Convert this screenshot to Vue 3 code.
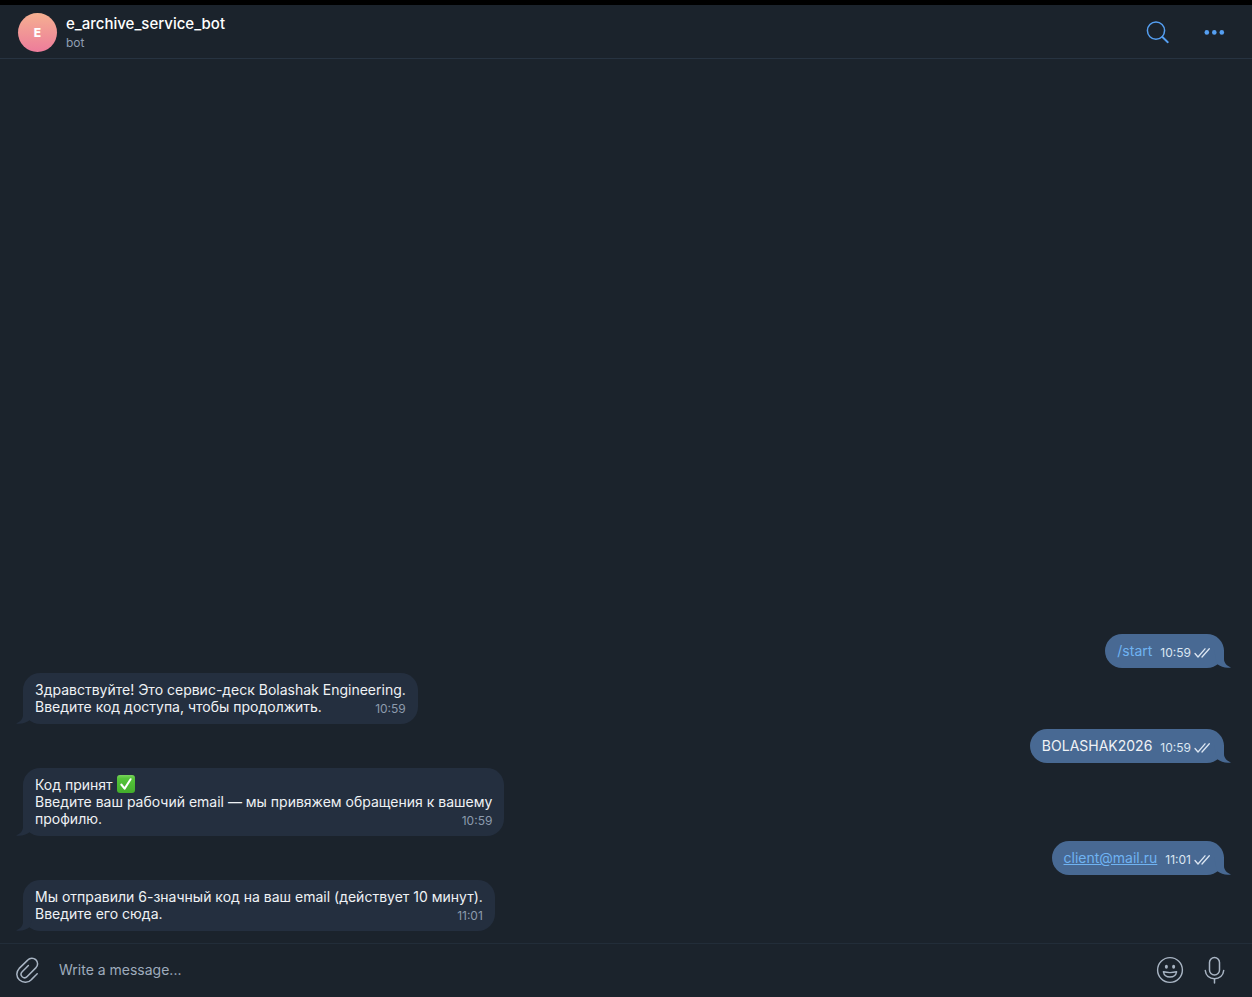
<template>
  <div class="chat">
    <header class="chat-header">
      <div class="avatar">E</div>
      <div class="peer">
        <h1 class="peer-name">e_archive_service_bot</h1>
        <p class="peer-status">bot</p>
      </div>
      <button class="icon-btn" type="button" aria-label="Search">
        <svg width="24" height="24" viewBox="0 0 24 24" fill="none" stroke="currentColor" stroke-width="1.5" stroke-linecap="round">
          <circle cx="10" cy="9.6" r="8.6" />
          <path d="M16.4 16L21.8 21.2" stroke-width="1.9" />
        </svg>
      </button>
      <button class="icon-btn" type="button" aria-label="More">
        <svg width="24" height="24" viewBox="0 0 24 24" fill="currentColor">
          <circle cx="4.8" cy="11.4" r="2.3" />
          <circle cx="12.3" cy="11.4" r="2.3" />
          <circle cx="19.8" cy="11.4" r="2.3" />
        </svg>
      </button>
    </header>

    <main class="messages">
      <div
        v-for="message in messages"
        :key="message.id"
        :class="['bubble', message.out ? 'bubble-out' : 'bubble-in']"
      >
        <svg v-if="message.out" class="tail" width="17" height="18" viewBox="0 0 17 18" aria-hidden="true">
          <path d="M0 0H10V9C10 13 13 16 17 17.5C12 18.5 7 17 3 14Z" />
        </svg>
        <svg v-else class="tail" width="17" height="18" viewBox="0 0 17 18" aria-hidden="true">
          <path d="M17 0H7V9C7 13 4 16 0 17.5C5 18.5 10 17 14 14Z" />
        </svg>

        <div class="text">
          <p v-for="(line, i) in message.lines" :key="i">
            <a v-if="message.href" :href="message.href" :class="{ underlined: message.underlined }">{{ line }}</a>
            <template v-else>{{ line }}</template>
            <template v-if="message.checked && i === 0">
              {{ ' ' }}
              <svg class="emoji" width="18" height="18" viewBox="0 0 18 18" role="img" aria-label="✅">
                <defs>
                  <linearGradient id="check-fill" x1="0" y1="0" x2="0" y2="1">
                    <stop offset="0" stop-color="#7ad45c" />
                    <stop offset="0.2" stop-color="#55c43a" />
                    <stop offset="1" stop-color="#43ad2c" />
                  </linearGradient>
                </defs>
                <rect width="18" height="18" rx="3" fill="url(#check-fill)" />
                <path d="M4.3 9.5L7.6 13.6L13.6 4.2" fill="none" stroke="#fff" stroke-width="2" stroke-linecap="round" stroke-linejoin="round" />
              </svg>
            </template>
          </p>
        </div>

        <div class="meta">
          <time>{{ message.time }}</time>
          <svg v-if="message.out" width="16" height="12" viewBox="0 0 16 12" fill="none" stroke="currentColor" stroke-width="1.3" stroke-linecap="round" stroke-linejoin="round">
            <path d="M1 6.5L4 10L11 1.8" />
            <path d="M8 10L15.3 1.8" />
          </svg>
        </div>
      </div>
    </main>

    <form class="composer" @submit.prevent="send">
      <button class="icon-btn" type="button" aria-label="Attach">
        <svg width="24" height="28" viewBox="0 0 24 28" fill="none" stroke="currentColor" stroke-width="1.5" stroke-linecap="round" stroke-linejoin="round">
          <path d="M22.2 17.8L16.6 23.4C13.2 27.1 8 27.1 4.5 24C1 20.8 0.9 15.8 4.2 12.4L12.7 4.1C15 1.6 18.5 1.6 20.9 3.9C23.2 6.1 23.1 9.6 20.8 11.9L12.2 20.5C10.8 22 8.6 22 7.2 20.7C5.8 19.3 5.8 17.1 7.2 15.7L13.4 9.5" />
        </svg>
      </button>
      <input v-model="draft" class="composer-input" type="text" placeholder="Write a message..." aria-label="Write a message" />
      <button class="icon-btn" type="button" aria-label="Emoji">
        <svg width="28" height="28" viewBox="0 0 28 28" fill="none" stroke="currentColor" stroke-width="1.4" stroke-linejoin="round">
          <circle cx="14" cy="14" r="12.4" />
          <ellipse cx="10.4" cy="10.8" rx="1.5" ry="2" fill="currentColor" stroke="none" />
          <ellipse cx="17.6" cy="10.8" rx="1.5" ry="2" fill="currentColor" stroke="none" />
          <path d="M7.4 15.8Q14 17.4 20.6 15.8C20 19 17.4 21 14 21C10.6 21 8 19 7.4 15.8Z" />
        </svg>
      </button>
      <button class="icon-btn" type="button" aria-label="Record voice message">
        <svg width="22" height="28" viewBox="0 0 22 28" fill="none" stroke="currentColor" stroke-width="1.5" stroke-linecap="round">
          <rect x="5.5" y="1.5" width="10" height="17.5" rx="5" />
          <path d="M1.3 14.5C1.7 19.5 5.5 22.8 10.5 22.8C15.5 22.8 19.3 19.5 19.7 14.5" />
          <path d="M10.5 22.8V27" />
        </svg>
      </button>
    </form>
  </div>
</template>

<script setup>
import { ref } from 'vue'

const draft = ref('')

const messages = ref([
  { id: 1, out: true, lines: ['/start'], href: '#start', time: '10:59' },
  {
    id: 2,
    lines: ['Здравствуйте! Это сервис-деск Bolashak Engineering.', 'Введите код доступа, чтобы продолжить.'],
    time: '10:59'
  },
  { id: 3, out: true, lines: ['BOLASHAK2026'], time: '10:59' },
  {
    id: 4,
    lines: ['Код принят', 'Введите ваш рабочий email — мы привяжем обращения к вашему', 'профилю.'],
    checked: true,
    time: '10:59'
  },
  { id: 5, out: true, lines: ['client@mail.ru'], href: 'mailto:client@mail.ru', underlined: true, time: '11:01' },
  {
    id: 6,
    lines: ['Мы отправили 6-значный код на ваш email (действует 10 минут).', 'Введите его сюда.'],
    time: '11:01'
  }
])

const send = () => {
  const text = draft.value.trim()
  if (!text) return

  messages.value.push({
    id: messages.value.length + 1,
    out: true,
    lines: [text],
    time: new Date().toTimeString().slice(0, 5)
  })
  draft.value = ''
}
</script>

<style>
body {
  background: #1b232c;
}
</style>

<style scoped>
.chat {
  display: flex;
  flex-direction: column;
  box-sizing: border-box;
  min-height: 100vh;
  border-top: 5px solid #000;
  background: #1b232c;
  color: #eff2f5;
  font-family: Inter, "Noto Sans", sans-serif;
  font-size: 14px;
  line-height: 17px;
}

p,
h1 {
  margin: 0;
}

.chat-header {
  display: flex;
  align-items: center;
  box-sizing: border-box;
  height: 54px;
  padding: 2px 26px 0 18px;
  border-bottom: 1px solid #273341;
}

.avatar {
  display: flex;
  align-items: center;
  justify-content: center;
  width: 39px;
  height: 39px;
  border-radius: 50%;
  background: linear-gradient(#f5b091, #ed7c9b);
  color: #fff;
  font-size: 12px;
  font-weight: 800;
}

.peer {
  flex: 1;
  padding-left: 9px;
}

.peer-name {
  font-size: 15px;
  font-weight: 500;
  line-height: 20px;
  color: #fff;
}

.peer-status {
  font-size: 12px;
  color: #8f9eb3;
}

.icon-btn {
  display: flex;
  padding: 0;
  border: 0;
  background: none;
  color: #a9b5c4;
  cursor: pointer;
}

.chat-header .icon-btn {
  margin-left: 32px;
  color: #559ff2;
}

.messages {
  flex: 1;
  display: flex;
  flex-direction: column;
  justify-content: flex-end;
  gap: 5px;
  padding: 12px 28px 12px 23px;
}

.bubble {
  position: relative;
  box-sizing: border-box;
  max-width: 484px;
  border-radius: 17px;
}

.bubble-in {
  display: grid;
  align-self: flex-start;
  padding: 8px 12px 9px;
  background: #242f3f;
}

.bubble-out {
  display: flex;
  align-self: flex-end;
  gap: 8px;
  padding: 8px 14px 9px 12px;
  background: #486993;
}

/* time shares the grid cell with the text, on its last line */
.bubble-in .text,
.bubble-in .meta {
  grid-area: 1 / 1;
}

.text {
  position: relative;
}

.text a {
  color: #6fb3f2;
  text-decoration: none;
}

.text a.underlined {
  text-decoration: underline;
}

.emoji {
  margin: -3px 0;
  vertical-align: 0;
}

.meta {
  position: relative;
  display: flex;
  align-items: center;
  align-self: end;
  justify-self: end;
  gap: 3px;
  margin-bottom: -1px;
  font-size: 12px;
  line-height: 14px;
  color: #8c9bad;
}

.bubble-out .meta {
  color: #dce6f2;
}

.tail {
  position: absolute;
  bottom: 0;
}

.bubble-in .tail {
  left: -7px;
  fill: #242f3f;
}

.bubble-out .tail {
  right: -7px;
  fill: #486993;
}

.composer {
  display: flex;
  align-items: center;
  box-sizing: border-box;
  height: 54px;
  padding: 0 26px 2px 15px;
  border-top: 1px solid #222d39;
}

.composer-input {
  flex: 1;
  min-width: 0;
  padding: 0 20px;
  border: 0;
  outline: 0;
  background: none;
  color: #eff2f5;
  font: inherit;
}

.composer-input::placeholder {
  color: #9eabbc;
  opacity: 1;
}

.composer-input ~ .icon-btn + .icon-btn {
  margin-left: 20px;
}
</style>
